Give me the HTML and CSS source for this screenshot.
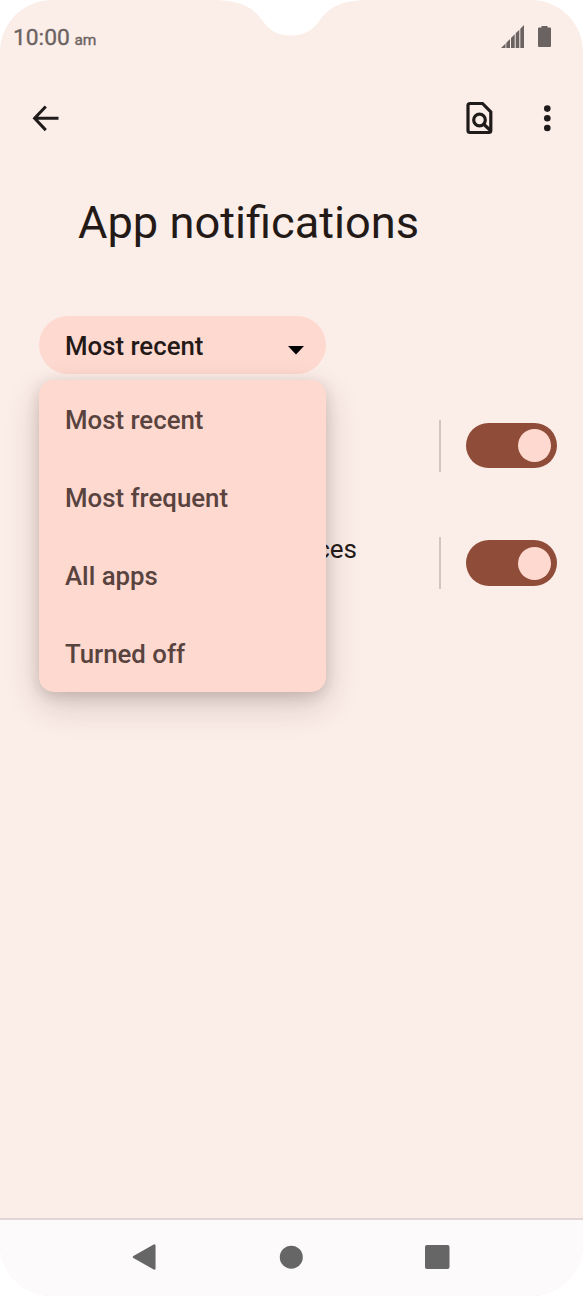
FILE: index.html
```html
<!DOCTYPE html>
<html lang="en">
<head>
<meta charset="utf-8">
<title>App notifications</title>
<link rel="stylesheet" href="styles.css">
</head>
<body>
<div class="phone">
  <svg class="notch" width="150" height="36" viewBox="0 0 150 36"><path d="M0 0C28 1 38 9 46 20C53 30 61 35.500 75 35.500S97 30 104 20C112 9 122 1 150 0Z"/></svg>
  <header class="status">
    <div class="clock">10:00 <span class="ampm">am</span></div>
    <svg class="status-icons" width="52" height="26" viewBox="0 0 52 26">
      <path d="M0 23L4.500 18.500V23ZM5.300 23V17.700L9 14V23ZM10 23V13L13.700 9.300V23ZM14.700 23V8.300L18.300 4.700V23ZM19.300 23V3.700L23 0V23Z"/>
      <path d="M37 3.500Q37 2.500 38 2.500H40.500V1H46.500V2.500H49Q50 2.500 50 3.500V21Q50 22 49 22H38Q37 22 37 21Z"/>
    </svg>
  </header>
  <nav class="toolbar">
    <svg class="back" width="28" height="28" viewBox="0 0 28 28"><path d="M26.500 14.300H3M13.800 2.500L2.600 14.300L13.800 26.100"/></svg>
    <svg class="find" width="28" height="34" viewBox="0 0 28 34"><path d="M4 2.500H16.500L24.800 11V29.500Q24.800 31.500 22.800 31.500H4Q2 31.500 2 29.500V4.500Q2 2.500 4 2.500Z"/><circle cx="13.500" cy="19" r="5.800"/><path d="M17.500 23L25 30"/></svg>
    <svg class="more" width="8" height="28" viewBox="0 0 8 28"><circle cx="4.300" cy="4.600" r="3.300"/><circle cx="4.300" cy="14.300" r="3.300"/><circle cx="4.300" cy="24" r="3.300"/></svg>
  </nav>
  <h1 class="title">App notifications</h1>
  <main class="content">
    <div class="filter">
      <div class="select"><span>Most recent</span><svg width="16" height="9" viewBox="0 0 16 9"><path d="M0 0H16L8 8.500Z"/></svg></div>
      <ul class="menu">
        <li>Most recent</li>
        <li>Most frequent</li>
        <li>All apps</li>
        <li>Turned off</li>
      </ul>
    </div>
    <div class="app-row"><span class="app-name"></span><span class="divider"></span><span class="switch"><span class="thumb"></span></span></div>
    <div class="app-row"><span class="app-name">ces</span><span class="divider"></span><span class="switch"><span class="thumb"></span></span></div>
  </main>
  <footer class="navbar">
    <svg width="26" height="28" viewBox="0 0 26 28"><path d="M2 14L22.300 2.500V25.500Z" stroke-width="2.500" stroke-linejoin="round"/></svg>
    <svg width="26" height="28" viewBox="0 0 26 28"><circle cx="13.300" cy="14.200" r="11.500"/></svg>
    <svg width="26" height="28" viewBox="0 0 26 28"><rect x="1" y="2" width="24.500" height="24" rx="2" stroke="none"/></svg>
  </footer>
</div>
</body>
</html>
```
FILE: styles.css
```css
* { box-sizing: border-box; }
body { margin: 0; background: #fff; font-family: Roboto, sans-serif; }
.phone {
  position: relative;
  display: flex;
  flex-direction: column;
  width: 583px;
  height: 1296px;
  overflow: hidden;
  border-radius: 52px;
  background: #fbede8;
  color: #231a18;
}
.notch { position: absolute; top: 0; left: 216px; fill: #fff; }
.status {
  display: flex;
  justify-content: space-between;
  height: 76px;
  padding: 25px 30px 0 13px;
  color: #6b6361;
}
.clock { font-size: 22.8px; line-height: 26px; -webkit-text-stroke: .35px #6b6361; }
.ampm { font-size: 15.5px; margin-left: -1px; }
.status-icons { fill: #6b6361; }
.toolbar {
  display: flex;
  align-items: center;
  height: 84px;
  padding: 0 32px 0 32px;
}
.back { fill: none; stroke: #1f1b1a; stroke-width: 3; }
.find { margin-left: auto; margin-right: 49px; fill: none; stroke: #1f1b1a; stroke-width: 3.2; }
.more { fill: #1f1b1a; }
.title {
  margin: 35px 0 0 78px;
  font-size: 45.2px;
  line-height: 56px;
  font-weight: 400;
}
.content { flex: 1; padding: 65px 26px 0 39px; }
.filter { position: relative; width: 286.5px; height: 58px; margin-bottom: 45.5px; }
.select {
  display: flex;
  align-items: center;
  justify-content: space-between;
  height: 58px;
  padding: 2px 21.5px 0 26px;
  border-radius: 29px;
  background: #fed9d0;
  font-size: 25.8px;
  font-weight: 500;
}
.select svg { margin-top: 8px; fill: #000; }
.menu {
  position: absolute;
  z-index: 1;
  top: 64px;
  left: 0;
  width: 286.5px;
  margin: 0;
  padding: 1.3px 26px 0;
  height: 311.5px;
  list-style: none;
  border-radius: 15px;
  background: #fed9d0;
  color: #59433e;
  font-size: 25.8px;
  font-weight: 500;
  box-shadow: 0 13px 34px rgba(65, 40, 40, .2), 0 4px 14px rgba(65, 40, 40, .16);
}
.menu li { height: 77.8px; line-height: 78px; }
.app-row { display: flex; align-items: center; height: 52px; margin-bottom: 65.5px; }
.app-name { width: 318px; margin-top: -28px; text-align: right; font-size: 26px; line-height: 30px; }
.divider { width: 1.5px; height: 52px; margin-left: 82px; background: #d2c5c1; }
.switch {
  display: flex;
  align-items: center;
  justify-content: flex-end;
  width: 91px;
  height: 45.5px;
  margin-left: auto;
  padding-right: 6px;
  border-radius: 23px;
  background: #8f4c38;
}
.thumb { width: 33px; height: 33px; border-radius: 50%; background: #fed9d0; }
.navbar {
  display: flex;
  align-items: center;
  justify-content: center;
  gap: 120px;
  height: 78px;
  padding: 0 1px 2px 0;
  border-top: 2px solid #e2d5d5;
  background: #fcfafb;
}
.navbar svg { fill: #666; stroke: #666; stroke-width: 0; }
```
